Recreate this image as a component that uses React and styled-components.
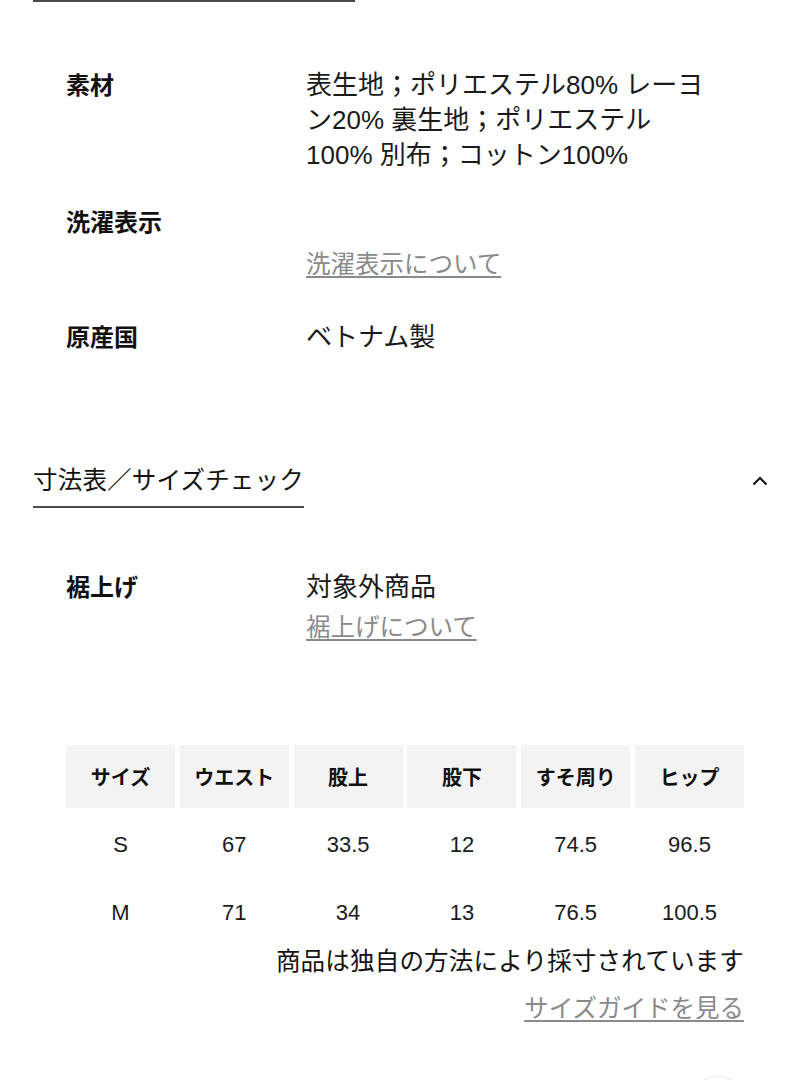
import React from "react";
import styled, { createGlobalStyle } from "styled-components";

const Global = createGlobalStyle`
  html, body { margin: 0; padding: 0; background: #fff; }
  body {
    font-family: "Liberation Sans", "Noto Sans CJK JP", sans-serif;
    color: #111;
    -webkit-font-smoothing: antialiased;
  }
`;

const Page = styled.div`
  width: 810px;
  box-sizing: border-box;
  padding: 0 33px 40px;
  display: flex;
  flex-direction: column;
`;

const TopRule = styled.div`
  width: 322px;
  height: 2px;
  background: #4a4a4a;
`;

const Body = styled.div`
  padding: 0 33px;
  display: flex;
  flex-direction: column;
  margin-top: ${(p) => p.$gap || 0}px;
`;

const SpecRow = styled.div`
  display: grid;
  grid-template-columns: 240px 1fr;
  margin-top: ${(p) => p.$gap || 0}px;
`;

const Label = styled.div`
  font-size: 24px;
  font-weight: 700;
  line-height: 35px;
  color: #111;
`;

const ValueCol = styled.div`
  display: flex;
  flex-direction: column;
  padding-top: ${(p) => p.$offset || 0}px;
`;

const Value = styled.div`
  font-size: 26px;
  line-height: 35px;
  color: #1a1a1a;
`;

const Line = styled.span`
  display: block;
  white-space: nowrap;
`;

const TextLink = styled.a`
  font-size: 24.5px;
  line-height: 30px;
  color: #8a8a8a;
  text-decoration: underline;
  text-decoration-color: #8a8a8a;
  text-decoration-thickness: 1.5px;
  text-underline-offset: 3px;
  align-self: ${(p) => (p.$right ? "flex-end" : "flex-start")};
  margin-top: ${(p) => p.$gap || 0}px;
  cursor: pointer;
`;

const SectionHeader = styled.div`
  display: flex;
  justify-content: space-between;
  align-items: flex-start;
  margin-top: 109px;
`;

const SectionTitle = styled.h2`
  margin: 0;
  font-size: 24.5px;
  font-weight: 400;
  line-height: 34px;
  letter-spacing: 0.2px;
  padding: 0 0 8px 0;
  border-bottom: 2px solid #4a4a4a;
  color: #111;
`;

const ChevronBtn = styled.button`
  border: 0;
  background: none;
  padding: 0;
  margin: 12px 9px 0 0;
  width: 16px;
  height: 10px;
  display: flex;
  cursor: pointer;
`;

const SizeTable = styled.div`
  display: grid;
  grid-template-columns: repeat(6, 1fr);
  column-gap: 4.8px;
  margin-top: 102px;
`;

const HeadCell = styled.div`
  height: 63px;
  margin-bottom: 3px;
  background: #f3f3f3;
  display: flex;
  align-items: center;
  justify-content: center;
  font-size: 20px;
  font-weight: 700;
  color: #111;
`;

const Cell = styled.div`
  height: 68px;
  display: flex;
  align-items: center;
  justify-content: center;
  font-size: 22px;
  color: #1a1a1a;
`;

const Note = styled.div`
  font-size: 24.5px;
  line-height: 30px;
  letter-spacing: 0.2px;
  text-align: right;
  color: #111;
`;

const Fab = styled.div`
  position: fixed;
  left: 692px;
  top: 1077px;
  width: 52px;
  height: 52px;
  border-radius: 50%;
  background: #fff;
  box-shadow: 0 -1px 3px rgba(0, 0, 0, 0.1);
`;

const headers = ["サイズ", "ウエスト", "股上", "股下", "すそ周り", "ヒップ"];
const rows = [
  ["S", "67", "33.5", "12", "74.5", "96.5"],
  ["M", "71", "34", "13", "76.5", "100.5"],
];

export default function App() {
  return (
    <>
      <Global />
      <Page>
        <TopRule />
        <Body $gap={66}>
          <SpecRow>
            <Label>素材</Label>
            <Value>
              <Line>表生地；ポリエステル80% レーヨ</Line>
              <Line>ン20% 裏生地；ポリエステル</Line>
              <Line>100% 別布；コットン100%</Line>
            </Value>
          </SpecRow>
          <SpecRow $gap={32}>
            <Label>洗濯表示</Label>
            <ValueCol $offset={45}>
              <TextLink>洗濯表示について</TextLink>
            </ValueCol>
          </SpecRow>
          <SpecRow $gap={40}>
            <Label>原産国</Label>
            <Value>ベトナム製</Value>
          </SpecRow>
        </Body>

        <SectionHeader>
          <SectionTitle>寸法表／サイズチェック</SectionTitle>
          <ChevronBtn aria-label="閉じる">
            <svg width="16" height="10" viewBox="0 0 16 10" fill="none">
              <path d="M1.5 8.5 L8 2 L14.5 8.5" stroke="#111" strokeWidth="2" />
            </svg>
          </ChevronBtn>
        </SectionHeader>

        <Body $gap={62}>
          <SpecRow>
            <Label>裾上げ</Label>
            <ValueCol>
              <Value>対象外商品</Value>
              <TextLink $gap={8}>裾上げについて</TextLink>
            </ValueCol>
          </SpecRow>

          <SizeTable>
            {headers.map((h) => (
              <HeadCell key={h}>{h}</HeadCell>
            ))}
            {rows.map((r) =>
              r.map((v, i) => <Cell key={r[0] + i}>{v}</Cell>)
            )}
          </SizeTable>
          <Note>商品は独自の方法により採寸されています</Note>
          <TextLink $right $gap={17}>サイズガイドを見る</TextLink>
        </Body>
      </Page>
      <Fab />
    </>
  );
}
